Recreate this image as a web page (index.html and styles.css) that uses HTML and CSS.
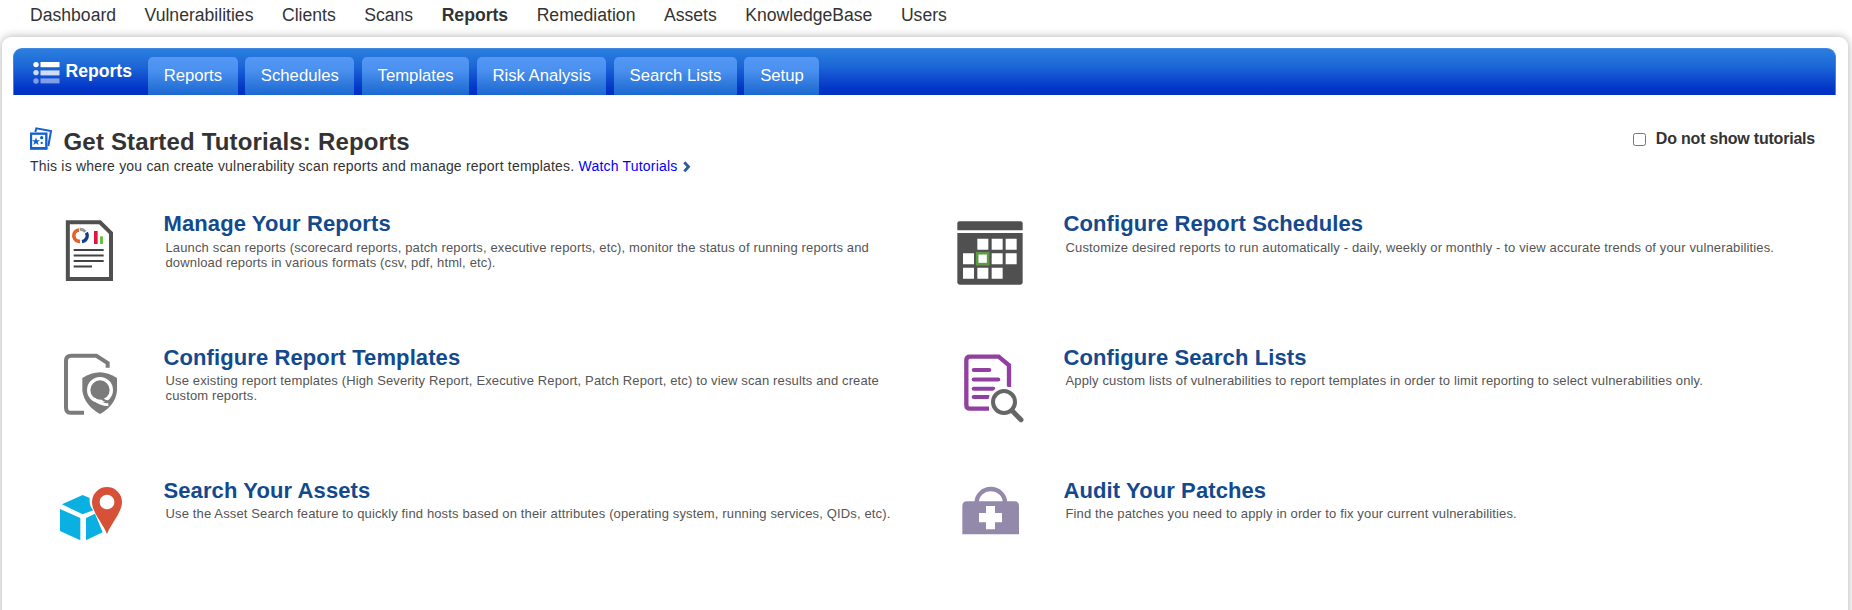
FILE: index.html
```html
<!DOCTYPE html>
<html lang="en">
<head>
<meta charset="utf-8">
<title>Reports</title>
<link rel="stylesheet" href="styles.css">
</head>
<body>
<nav class="mainnav">
<a>Dashboard</a><a>Vulnerabilities</a><a>Clients</a><a>Scans</a><a class="current">Reports</a><a>Remediation</a><a>Assets</a><a>KnowledgeBase</a><a>Users</a>
</nav>
<main class="panel">
<header class="bar">
<div class="module">
<svg class="module-icon" width="28" height="24" viewBox="0 0 28 24" fill="#fff"><g><circle cx="3" cy="3.6" r="2.7"/><rect x="7.500" y="1" width="19" height="5.2"/></g><g opacity=".8"><circle cx="3" cy="11.6" r="2.7"/><rect x="7.500" y="9.400" width="19" height="5"/></g><g opacity=".48"><circle cx="3" cy="20" r="2.7"/><rect x="7.500" y="17.400" width="19" height="5"/></g></svg>
<span>Reports</span>
</div>
<nav class="tabs"><a>Reports</a><a>Schedules</a><a>Templates</a><a>Risk Analysis</a><a>Search Lists</a><a>Setup</a></nav>
</header>
<section class="intro">
<div class="intro-main">
<div class="heading">
<svg width="24" height="24" viewBox="0 -1 72 72"><path d="M16 14 19 3 63 11 55 56" fill="none" stroke="#1560cf" stroke-width="6"/><rect x="3" y="19" width="46" height="44" fill="#fff" stroke="#1560cf" stroke-width="7"/><path d="M0 59h52v8H0z" fill="#1560cf"/><path d="M18 30l3 9h9l-7 5 3 9-8-5-8 5 3-9-7-5h9z" fill="#1560cf"/><circle cx="35" cy="31" r="5" fill="#1560cf"/><circle cx="35" cy="47" r="3.500" fill="#1560cf"/></svg>
<h1>Get Started Tutorials: Reports</h1>
</div>
<p>This is where you can create vulnerability scan reports and manage report templates. <a>Watch Tutorials</a><svg class="chevron" width="8" height="12" viewBox="0 0 8 12"><path d="M1.300 1.200 5.500 5.800 1.300 10.400" fill="none" stroke="#2a5b9c" stroke-width="2.800"/></svg></p>
</div>
<label class="hide"><input type="checkbox"><span>Do not show tutorials</span></label>
</section>
<section class="cards">
<article>
<svg class="icon" viewBox="0 0 372 300"><path d="M83.500 67H180L213 99V237H83.500Z" fill="#fff" stroke="#505050" stroke-width="12"/><path d="M101 150H191M101 166.500H191M101 183H191M101 199.500H156" stroke="#424242" stroke-width="6"/><path d="M117 90A17 17 0 0 0 120 124" fill="none" stroke="#e2622b" stroke-width="11"/><path d="M139 98A18 18 0 0 1 126 125" fill="none" stroke="#123f8c" stroke-width="10"/><path d="M119 88Q129 87 136 95" fill="none" stroke="#999" stroke-width="9"/><path d="M162 93h11v39h-11z" fill="#e3173c"/><path d="M180 109h9v23h-9z" fill="#6abf45"/></svg>
<div class="text"><h2>Manage Your Reports</h2><p>Launch scan reports (scorecard reports, patch reports, executive reports, etc), monitor the status of running reports and download reports in various formats (csv, pdf, html, etc).</p></div>
</article>
<article>
<svg class="icon" viewBox="0 0 372 300"><path d="M52 91V70Q52 64 58 64H242Q248 64 248 70V91Z" fill="#505050"/><path d="M52 99H248V247Q248 254 241 254H59Q52 254 52 247Z" fill="#505050"/><path d="M112 116h33v33h-33zM155 116h33v33h-33zM197 116h33v33h-33zM69 160h33v33h-33zM155 160h33v33h-33zM197 160h33v33h-33zM69 203h33v33h-33zM112 203h33v33h-33zM155 203h33v33h-33z" fill="#fff"/><rect x="111.500" y="159.500" width="33" height="33" fill="#fff" stroke="#5c9a43" stroke-width="8"/></svg>
<div class="text"><h2>Configure Report Schedules</h2><p>Customize desired reports to run automatically - daily, weekly or monthly - to view accurate trends of your vulnerabilities.</p></div>
</article>
<article class="lower">
<svg class="icon" viewBox="0 -6 372 300"><path d="M132 233.500H94Q78 233.500 78 218V78Q78 62.500 94 62.500H169L203 84V98" fill="none" stroke="#7b7b7b" stroke-width="12"/><path d="M180 112Q204 113 231 129V167Q227 210 180 237Q133 210 127 167V129Q154 113 180 112Z" fill="#7b7b7b"/><circle cx="180" cy="165" r="34" fill="none" stroke="#fff" stroke-width="10"/><path d="M163 192Q180 209 205 209" fill="none" stroke="#fff" stroke-width="9"/><path d="M179 184Q190 199 209 200" fill="none" stroke="#7b7b7b" stroke-width="6"/></svg>
<div class="text"><h2>Configure Report Templates</h2><p>Use existing report templates (High Severity Report, Executive Report, Patch Report, etc) to view scan results and create custom reports.</p></div>
</article>
<article class="lower">
<svg class="icon" viewBox="0 -6 372 300"><path d="M147 221H90Q79 221 79 210V76Q79 65 90 65H176L207 91V156" fill="none" stroke="#9140a1" stroke-width="13"/><path d="M101 105H148M101 133.500H175M101 161H160M101 186H145" stroke="#9140a1" stroke-width="12" stroke-linecap="round"/><circle cx="192" cy="201" r="47" fill="#fff"/><circle cx="192" cy="201" r="33" fill="#fff" stroke="#666" stroke-width="12"/><path d="M218 229 243 254" stroke="#666" stroke-width="15" stroke-linecap="round"/></svg>
<div class="text"><h2>Configure Search Lists</h2><p>Apply custom lists of vulnerabilities to report templates in order to limit reporting to select vulnerabilities only.</p></div>
</article>
<article class="lower">
<svg class="icon" viewBox="0 -12 372 300"><path d="M66 103 128 75 149 84Q147 108 160 121L128 133ZM60 117 121 144V211L60 183ZM138 144 165 131 188 187 138 211Z" fill="#09b0e1"/><path fill-rule="evenodd" d="M201 192C190 163 156 127 156 96A45 45 0 0 1 246 96C246 127 212 163 201 192ZM201 74a22 22 0 1 0 .1 0Z" fill="#d65137"/></svg>
<div class="text"><h2>Search Your Assets</h2><p>Use the Asset Search feature to quickly find hosts based on their attributes (operating system, running services, QIDs, etc).</p></div>
</article>
<article class="lower">
<svg class="icon" viewBox="0 -12 372 300"><path d="M67 193V108Q67 94 81 94H223Q237 94 237 108V193Z" fill="#9389aa"/><path d="M110 98A42.500 41 0 0 1 195 98" fill="none" stroke="#9389aa" stroke-width="13"/><path d="M138 108h27v21h21v28h-21v21h-27v-21h-21v-28h21z" fill="#fff"/></svg>
<div class="text"><h2>Audit Your Patches</h2><p>Find the patches you need to apply in order to fix your current vulnerabilities.</p></div>
</article>
</section>
</main>
</body>
</html>
```
FILE: styles.css
```css
* { box-sizing: border-box; }
body { margin: 0; height: 610px; overflow: hidden; background: #fff; color: #333; font-family: "Liberation Sans", Arial, sans-serif; }
h1, h2, p { margin: 0; }
.mainnav { display: flex; gap: 28.5px; height: 37px; padding: 4px 0 0 30px; font-size: 17.6px; line-height: 22px; }
.current { font-weight: bold; }
.panel { width: 1846px; height: 590px; margin-left: 2px; padding: 11px 12px 0 11px; border-radius: 9px; background: #fff; box-shadow: 0 0 10px rgba(0, 0, 0, .32); }
.bar { display: flex; height: 47px; border: 1px solid #3f87e0; border-bottom: 0; border-radius: 9px 9px 0 0; background: linear-gradient(#2b7fdf, #1c66d6 38%, #0336c8 85%, #0030c4); color: #fff; }
.module { display: flex; width: 134px; padding: 12px 0 0 19px; gap: 4.5px; font-size: 17.6px; font-weight: bold; line-height: 20px; }
.tabs { display: flex; gap: 7.5px; padding-top: 8px; font-size: 16.7px; }
.tabs a { height: 38px; padding: 0 15.65px; border-radius: 5px 5px 0 0; background: linear-gradient(#5598f5, #4a90ef 35%, #1b68d0); line-height: 37px; }
.intro { display: flex; justify-content: space-between; height: 105px; padding: 32px 21px 0 17px; }
.heading { display: flex; height: 31px; }
h1 { padding: 0 0 0 9.5px; font-size: 24px; line-height: 30px; letter-spacing: .18px; }
.intro p { font-size: 14px; line-height: 16px; letter-spacing: .2px; }
.intro p a { color: #00f; }
.chevron { margin-left: 6px; vertical-align: -2px; }
.hide { display: flex; align-items: flex-start; gap: 10px; font-size: 16px; font-weight: bold; line-height: 22px; letter-spacing: -.21px; }
.hide input { width: 13px; height: 13px; margin: 6px 0 0; }
.hide span { padding-top: 1px; }
.cards { display: grid; grid-template-columns: 900px 900px; grid-auto-rows: 133px; margin-left: 27px; }
article { display: flex; }
.icon { flex: none; width: 124px; height: 100px; }
.text { padding-top: 11px; }
h2 { margin-left: -.5px; color: #134a8e; font-size: 22px; line-height: 26px; letter-spacing: .1px; }
.text p { width: 740px; padding: 3px 0 0 1.5px; color: #555; font-size: 13px; line-height: 15px; letter-spacing: .14px; }
.lower .text { padding-top: 12px; }
.lower .text p { padding-top: 2px; }
```
